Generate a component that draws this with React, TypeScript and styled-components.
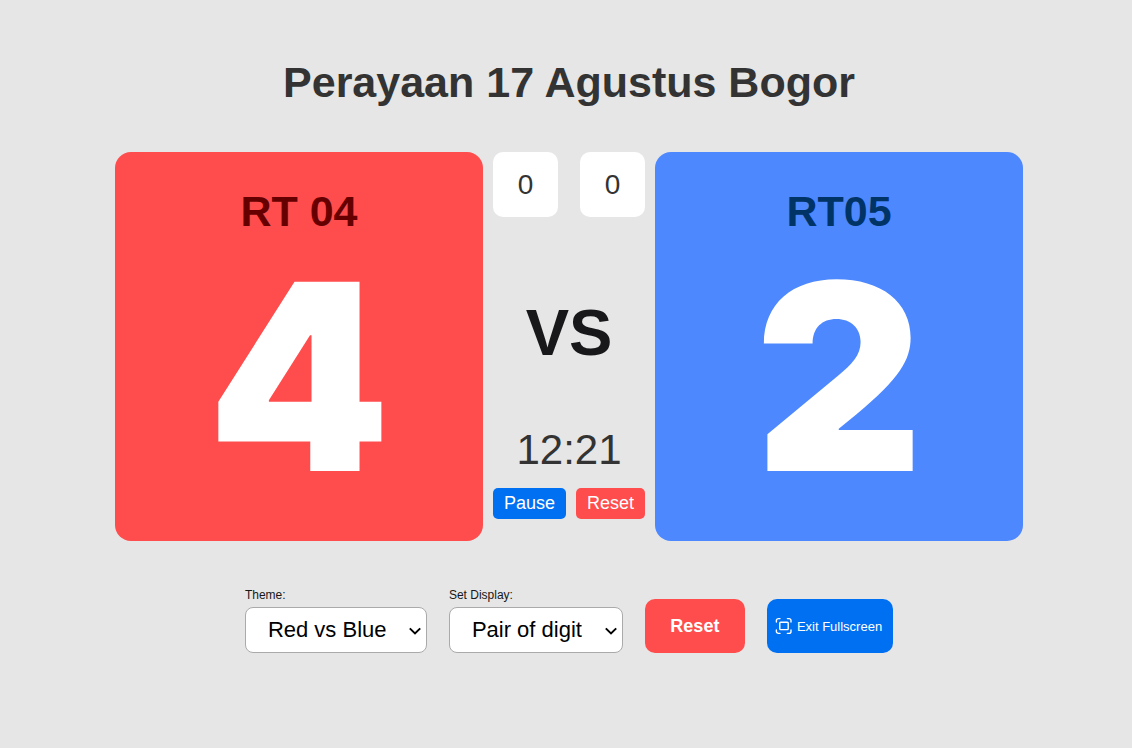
import { useState } from "react";
import styled, { createGlobalStyle } from "styled-components";

const GlobalStyle = createGlobalStyle`
  * { box-sizing: border-box; }
  body {
    margin: 0;
    background: #e6e6e6;
    color: #333333;
    font-family: Arial, "Liberation Sans", sans-serif;
  }
  button, select { font-family: inherit; }
`;

const Page = styled.main`
  display: flex;
  flex-direction: column;
  align-items: center;
  padding: 57px 109px 56px 115px;
`;

const Title = styled.h1`
  margin: 0 0 45px;
  font-size: 43px;
  line-height: 50px;
  text-align: center;
`;

const Board = styled.section`
  display: grid;
  grid-template-columns: 1fr auto 1fr;
  gap: 10px;
  width: 100%;
`;

const TeamCard = styled.article<{ $background: string; $ink: string }>`
  display: flex;
  flex-direction: column;
  align-items: center;
  padding: 34px 20px 24px;
  border-radius: 16px;
  background: ${(p) => p.$background};
  color: ${(p) => p.$ink};
`;

const TeamName = styled.h2`
  margin: 0;
  font-size: 43px;
  line-height: 50px;
`;

const Score = styled.div`
  color: #ffffff;
  font-family: "Arial Black", Inter, "Open Sans", sans-serif;
  font-size: 260px;
  font-weight: 900;
  line-height: 281px;
`;

const Center = styled.div`
  display: flex;
  flex-direction: column;
  justify-content: space-between;
  padding-bottom: 22px;
`;

const Row = styled.div<{ $gap: number }>`
  display: flex;
  justify-content: space-between;
  gap: ${(p) => p.$gap}px;
`;

const SetScore = styled.div`
  width: 65px;
  border-radius: 10px;
  background: #ffffff;
  font-size: 28px;
  line-height: 65px;
  text-align: center;
`;

const Versus = styled.div`
  padding-top: 24px;
  color: #18181b;
  font-size: 65px;
  font-weight: 700;
  line-height: 76px;
  text-align: center;
`;

const Timer = styled.div`
  margin-bottom: 12px;
  font-size: 42px;
  line-height: 52px;
  text-align: center;
`;

const TimerButton = styled.button<{ $background: string }>`
  padding: 5px 11px;
  border: 0;
  border-radius: 5px;
  background: ${(p) => p.$background};
  color: #ffffff;
  font-size: 18px;
  line-height: 21px;
`;

const Controls = styled.footer`
  display: flex;
  flex-wrap: wrap;
  align-items: flex-end;
  justify-content: center;
  gap: 22px;
  margin-top: 46px;
`;

const Field = styled.div`
  display: flex;
  flex-direction: column;
  gap: 4px;
`;

const Label = styled.label`
  color: #171717;
  font-size: 12px;
  line-height: 16px;
`;

const SelectBox = styled.div`
  position: relative;
  display: flex;

  svg {
    position: absolute;
    top: 50%;
    right: 6px;
    margin-top: -5px;
    pointer-events: none;
  }
`;

const Select = styled.select`
  appearance: none;
  height: 46px;
  padding: 0 39px 2px 22px;
  border: 1px solid #aaaaaa;
  border-radius: 8px;
  background: #ffffff;
  color: #000000;
  font-size: 22px;
`;

const ActionButton = styled.button<{ $background: string; $compact?: boolean }>`
  display: flex;
  align-items: center;
  justify-content: center;
  gap: 4px;
  min-width: 100px;
  height: 54px;
  padding: ${(p) => (p.$compact ? "0 11px 0 8px" : "0 25px")};
  border: 0;
  border-radius: 10px;
  background: ${(p) => p.$background};
  color: #ffffff;
  font-size: ${(p) => (p.$compact ? 13 : 18)}px;
  font-weight: ${(p) => (p.$compact ? 400 : 700)};
`;

const red = "#ff4d4d";
const blue = "#0070f3";

function FullscreenIcon() {
  return (
    <svg width="18" height="18" viewBox="0 0 18 18" fill="none" stroke="currentColor" strokeWidth="1.4" strokeLinecap="round" strokeLinejoin="round" aria-hidden="true">
      <path d="M1.4 5V3.6a2 2 0 0 1 2-2H5M12.4 1.6H14a2 2 0 0 1 2 2V5M16 13v1.4a2 2 0 0 1-2 2h-1.6M5 16.4H3.4a2 2 0 0 1-2-2V13" />
      <rect x="4.8" y="5.2" width="8.4" height="7.4" rx="0.8" />
    </svg>
  );
}

function Chevron() {
  return (
    <svg width="12" height="12" viewBox="0 0 12 12" fill="none" stroke="#000000" strokeWidth="2" aria-hidden="true">
      <path d="M0.8 3.4 6 8.4l5.2-5" />
    </svg>
  );
}

export default function App() {
  const [theme, setTheme] = useState("Red vs Blue");
  const [display, setDisplay] = useState("Pair of digit");
  return (
    <>
      <GlobalStyle />
      <Page>
        <Title>Perayaan 17 Agustus Bogor</Title>
        <Board>
          <TeamCard $background={red} $ink="#660000">
            <TeamName>RT 04</TeamName>
            <Score>4</Score>
          </TeamCard>
          <Center>
            <Row $gap={22}>
              <SetScore>0</SetScore>
              <SetScore>0</SetScore>
            </Row>
            <Versus>VS</Versus>
            <div>
              <Timer>12:21</Timer>
              <Row $gap={10}>
                <TimerButton type="button" $background={blue}>Pause</TimerButton>
                <TimerButton type="button" $background={red}>Reset</TimerButton>
              </Row>
            </div>
          </Center>
          <TeamCard $background="#4d88ff" $ink="#003366">
            <TeamName>RT05</TeamName>
            <Score>2</Score>
          </TeamCard>
        </Board>
        <Controls>
          <Field>
            <Label htmlFor="theme">Theme:</Label>
            <SelectBox>
              <Select id="theme" value={theme} onChange={(e) => setTheme(e.target.value)}>
                <option>Red vs Blue</option>
              </Select>
              <Chevron />
            </SelectBox>
          </Field>
          <Field>
            <Label htmlFor="display">Set Display:</Label>
            <SelectBox>
              <Select id="display" value={display} onChange={(e) => setDisplay(e.target.value)}>
                <option>Pair of digit</option>
              </Select>
              <Chevron />
            </SelectBox>
          </Field>
          <ActionButton type="button" $background={red}>Reset</ActionButton>
          <ActionButton type="button" $background={blue} $compact>
            <FullscreenIcon />
            Exit Fullscreen
          </ActionButton>
        </Controls>
      </Page>
    </>
  );
}
